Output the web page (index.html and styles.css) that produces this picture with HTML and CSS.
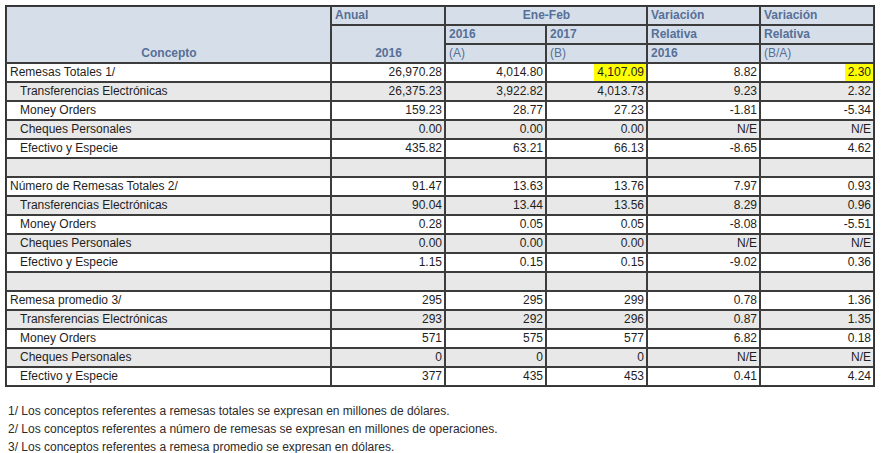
FILE: index.html
```html
<!DOCTYPE html>
<html lang="es">
<head>
<meta charset="utf-8">
<title>Remesas</title>
<link rel="stylesheet" href="styles.css">
</head>
<body>
<div class="page">
  <table class="data">
    <colgroup>
      <col class="c-concepto"><col class="c-anual"><col class="c-a"><col class="c-b"><col class="c-v1"><col class="c-v2">
    </colgroup>
    <thead>
      <tr>
        <th rowspan="3" class="center bottom">Concepto</th>
        <th class="left">Anual</th>
        <th colspan="2" class="center">Ene-Feb</th>
        <th class="left">Variación</th>
        <th class="left">Variación</th>
      </tr>
      <tr>
        <th rowspan="2" class="center bottom">2016</th>
        <th class="left">2016</th>
        <th class="left">2017</th>
        <th class="left">Relativa</th>
        <th class="left">Relativa</th>
      </tr>
      <tr>
        <th class="left light">(A)</th>
        <th class="left light">(B)</th>
        <th class="left">2016</th>
        <th class="left light">(B/A)</th>
      </tr>
    </thead>
    <tbody>
      <tr><td>Remesas Totales 1/</td><td>26,970.28</td><td>4,014.80</td><td class="hl"><span class="mark">4,107.09</span></td><td>8.82</td><td class="hl"><span class="mark">2.30</span></td></tr>
      <tr><td class="sub">Transferencias Electrónicas</td><td>26,375.23</td><td>3,922.82</td><td>4,013.73</td><td>9.23</td><td>2.32</td></tr>
      <tr><td class="sub">Money Orders</td><td>159.23</td><td>28.77</td><td>27.23</td><td>-1.81</td><td>-5.34</td></tr>
      <tr><td class="sub">Cheques Personales</td><td>0.00</td><td>0.00</td><td>0.00</td><td>N/E</td><td>N/E</td></tr>
      <tr><td class="sub">Efectivo y Especie</td><td>435.82</td><td>63.21</td><td>66.13</td><td>-8.65</td><td>4.62</td></tr>
      <tr><td></td><td></td><td></td><td></td><td></td><td></td></tr>
      <tr><td>Número de Remesas Totales 2/</td><td>91.47</td><td>13.63</td><td>13.76</td><td>7.97</td><td>0.93</td></tr>
      <tr><td class="sub">Transferencias Electrónicas</td><td>90.04</td><td>13.44</td><td>13.56</td><td>8.29</td><td>0.96</td></tr>
      <tr><td class="sub">Money Orders</td><td>0.28</td><td>0.05</td><td>0.05</td><td>-8.08</td><td>-5.51</td></tr>
      <tr><td class="sub">Cheques Personales</td><td>0.00</td><td>0.00</td><td>0.00</td><td>N/E</td><td>N/E</td></tr>
      <tr><td class="sub">Efectivo y Especie</td><td>1.15</td><td>0.15</td><td>0.15</td><td>-9.02</td><td>0.36</td></tr>
      <tr><td></td><td></td><td></td><td></td><td></td><td></td></tr>
      <tr><td>Remesa promedio 3/</td><td>295</td><td>295</td><td>299</td><td>0.78</td><td>1.36</td></tr>
      <tr><td class="sub">Transferencias Electrónicas</td><td>293</td><td>292</td><td>296</td><td>0.87</td><td>1.35</td></tr>
      <tr><td class="sub">Money Orders</td><td>571</td><td>575</td><td>577</td><td>6.82</td><td>0.18</td></tr>
      <tr><td class="sub">Cheques Personales</td><td>0</td><td>0</td><td>0</td><td>N/E</td><td>N/E</td></tr>
      <tr><td class="sub">Efectivo y Especie</td><td>377</td><td>435</td><td>453</td><td>0.41</td><td>4.24</td></tr>
    </tbody>
  </table>
  <div class="notes">
    <p>1/ Los conceptos referentes a remesas totales se expresan en millones de dólares.</p>
    <p>2/ Los conceptos referentes a número de remesas se expresan en millones de operaciones.</p>
    <p>3/ Los conceptos referentes a remesa promedio se expresan en dólares.</p>
  </div>
</div>
</body>
</html>
```

FILE: styles.css
```css
html, body {
  margin: 0;
  padding: 0;
  background: #ffffff;
}
body {
  font-family: "Liberation Sans", Arial, sans-serif;
  font-size: 12px;
  color: #222222;
}
.page {
  padding: 5px 0 0 5px;
}
.data {
  table-layout: fixed;
  width: 870px;
  border-collapse: separate;
  border-spacing: 0;
  border: 1px solid #333333;
}
.c-concepto { width: 325px; }
.c-anual { width: 114px; }
.c-a { width: 101px; }
.c-b { width: 101px; }
.c-v1 { width: 113px; }
.c-v2 { width: 114px; }

.data th, .data td {
  box-sizing: border-box;
  height: 19px;
  border: 1px solid #3c3c3c;
  padding: 0 2px 0 3px;
  line-height: 15px;
  white-space: nowrap;
  overflow: hidden;
}
.data th {
  background: #d6dfe9;
  color: #566f98;
  font-weight: bold;
  vertical-align: middle;
}
.data th.left { text-align: left; }
.data th.center { text-align: center; }
.data th.bottom { vertical-align: bottom; padding-bottom: 1px; }
.data th.light { font-weight: normal; }

.data td {
  text-align: right;
  vertical-align: middle;
  color: #1e1e1e;
}
.data td:first-child {
  text-align: left;
}
.data td.sub {
  padding-left: 13px;
}
.data tbody tr:nth-child(even) td {
  background: #e8e8e8;
}
.data td.hl {
  padding-right: 0;
}
.mark {
  display: inline-block;
  background: #ffff00;
  line-height: 17px;
  padding: 0 2px 0 3px;
  vertical-align: top;
}
.notes {
  padding: 15px 0 0 3px;
  color: #2b2b2b;
}
.notes p {
  margin: 0;
  line-height: 18px;
}
```
